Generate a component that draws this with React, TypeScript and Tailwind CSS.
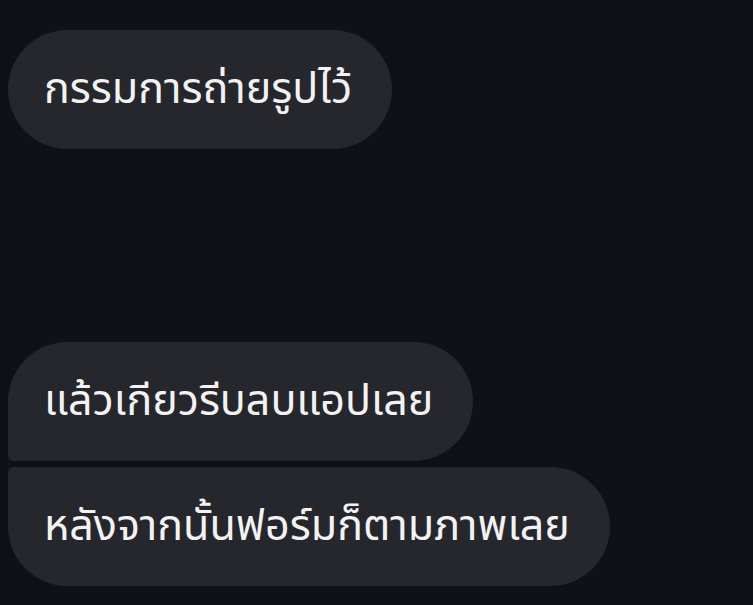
import React from "react";

const messages = [
  { text: "กรรมการถ่ายรูปไว้", shape: "rounded-[60px]", gap: "mt-[30px]" },
  { text: "แล้วเกียวรีบลบแอปเลย", shape: "rounded-[60px] rounded-bl-[6px]", gap: "mt-[193px]" },
  { text: "หลังจากนั้นฟอร์มก็ตามภาพเลย", shape: "rounded-[60px] rounded-tl-[6px]", gap: "mt-[6px]" },
];

export default function App() {
  return (
    <div
      className="flex h-[605px] w-[753px] flex-col items-start overflow-hidden bg-[#0e1116] pl-2"
      style={{ fontFamily: '"Noto Sans", "Noto Sans Thai", sans-serif' }}
    >
      {messages.map((m) => (
        <div
          key={m.text}
          className={`${m.gap} ${m.shape} flex h-[119px] items-center bg-[#25272c] pb-[6px] pl-9 pr-10 text-[43px] text-[#f2f2f2]`}
        >
          <span className="whitespace-nowrap leading-none">{m.text}</span>
        </div>
      ))}
    </div>
  );
}
